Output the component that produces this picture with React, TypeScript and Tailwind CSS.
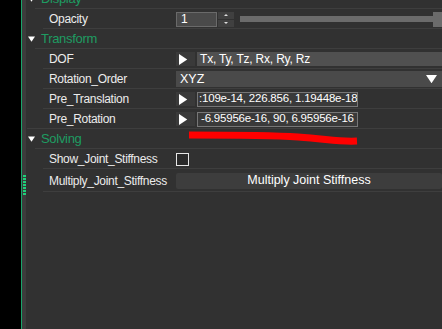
import React from "react";

const font = { fontFamily: '"Liberation Sans", Arial, sans-serif' };

function Tri({ down = false, size = 8, color = "#ffffff" }: { down?: boolean; size?: number; color?: string }) {
  return down ? (
    <svg width={size} height={size * 0.75} viewBox="0 0 8 6">
      <polygon points="0,0 8,0 4,6" fill={color} />
    </svg>
  ) : (
    <svg width={size * 0.75} height={size} viewBox="0 0 6 8">
      <polygon points="0,0 6,4 0,8" fill={color} />
    </svg>
  );
}

function Header({ label }: { label: string }) {
  return (
    <div className="relative flex h-[20px] items-center">
      <div className="ml-[1px] flex w-[7px] items-center">
        <Tri down size={8} />
      </div>
      <span className="ml-[6px] text-[13px] tracking-[-0.3px] text-[#1e9c62]">{label}</span>
      <div className="absolute bottom-0 left-[8px] right-0 h-px bg-[#3e3e3e]" />
    </div>
  );
}

function Row({ label, children, h = "h-[20px]", full = false }: { label: string; children?: React.ReactNode; h?: string; full?: boolean }) {
  return (
    <div className={`relative flex ${h} items-center`}>
      <span className="ml-[22px] w-[127px] shrink-0 whitespace-nowrap text-[12px] tracking-[-0.3px] text-[#ececec]">{label}</span>
      <div className="flex min-w-0 flex-1 items-center">{children}</div>
      <div className={`absolute bottom-0 ${full ? "left-0" : "left-[16px]"} right-0 h-px bg-[#3e3e3e]`} />
    </div>
  );
}

function ArrowBtn() {
  return (
    <div className="flex h-[14px] w-[19px] shrink-0 items-center justify-center bg-[#3a3a3a] pr-[4px]">
      <Tri size={11} />
    </div>
  );
}

export default function App() {
  return (
    <div className="flex h-[329px] w-[442px] overflow-hidden bg-black" style={font}>
      <div className="w-[21px] shrink-0 bg-black" />
      <div className="w-px shrink-0 bg-[#1aa46a]" />
      <div className="relative w-[4px] shrink-0 bg-[#3c3c3c]">
        <div className="absolute left-[1px] top-[175px] flex flex-col gap-[1px]">
          {Array.from({ length: 7 }).map((_, i) => (
            <div key={i} className="h-[2px] w-[3px] bg-[#1fd07a]" />
          ))}
        </div>
      </div>
      <div className="flex-1 bg-[#313131] pl-[1px]">
        <div className="mt-[-11px] flex flex-col">
          <Header label="Display" />
          <Row label="Opacity">
            <div className="flex h-[15px] w-[41px] items-center border border-[#6a6a6a] bg-[#4a4a4a] pl-[4px] text-[12px] text-white">1</div>
            <div className="ml-[1px] flex h-[15px] w-[16px] flex-col justify-between">
              <div className="flex h-[7px] items-center justify-center bg-[#404040]">
                <svg width="4" height="2" viewBox="0 0 4 2"><polygon points="0,2 4,2 2,0" fill="#ddd" /></svg>
              </div>
              <div className="flex h-[7px] items-center justify-center bg-[#404040]">
                <svg width="4" height="2" viewBox="0 0 4 2"><polygon points="0,0 4,0 2,2" fill="#ddd" /></svg>
              </div>
            </div>
            <div className="ml-[6px] flex h-[16px] flex-1 items-center">
              <div className="h-[6px] flex-1 bg-[#6b6b6b]" />
              <div className="h-[15px] w-[9px] bg-[#6b6b6b]" />
            </div>
          </Row>
          <Header label="Transform" />
          <Row label="DOF">
            <ArrowBtn />
            <div className="ml-[2px] flex h-[14px] flex-1 items-center whitespace-nowrap bg-[#505050] pl-[3px] text-[12px] tracking-[-0.2px] text-white">Tx, Ty, Tz, Rx, Ry, Rz</div>
          </Row>
          <Row label="Rotation_Order">
            <div className="flex h-[16px] flex-1 items-center justify-between bg-[#4a4a4a] pl-[4px] pr-[5px] text-[12.5px] text-white">
              <span>XYZ</span>
              <Tri down size={11} />
            </div>
          </Row>
          <Row label="Pre_Translation">
            <ArrowBtn />
            <div className="ml-[2px] flex h-[15px] w-[161px] items-center overflow-hidden whitespace-nowrap border border-[#777] bg-[#3a3a3a] pl-[1px] text-[11.5px] tracking-[-0.2px] text-white">:109e-14, 226.856, 1.19448e-18</div>
          </Row>
          <Row label="Pre_Rotation" full>
            <ArrowBtn />
            <div className="ml-[2px] flex h-[15px] w-[161px] items-center overflow-hidden whitespace-nowrap border border-[#777] bg-[#3a3a3a] pl-[3px] text-[11.5px] tracking-[-0.2px] text-white">-6.95956e-16, 90, 6.95956e-16</div>
          </Row>
          <div className="relative">
            <Header label="Solving" />
            <svg className="absolute left-[161px] top-[1px]" width="172" height="17" viewBox="0 0 172 17">
              <path d="M1 5 C 40 5, 80 5, 110 7 S 150 12, 169 11" stroke="#ff0000" strokeWidth="7" fill="none" strokeLinecap="butt" />
            </svg>
          </div>
          <Row label="Show_Joint_Stiffness">
            <div className="h-[13px] w-[13px] border border-[#e6e6e6] bg-[#2a2a2a]" />
          </Row>
          <Row label="Multiply_Joint_Stiffness" h="h-[23px]">
            <div className="flex h-[16px] flex-1 items-center justify-center whitespace-nowrap rounded-[2px] bg-[#3d3d3d] text-[12.5px] text-white">Multiply Joint Stiffness</div>
          </Row>
        </div>
      </div>
    </div>
  );
}
